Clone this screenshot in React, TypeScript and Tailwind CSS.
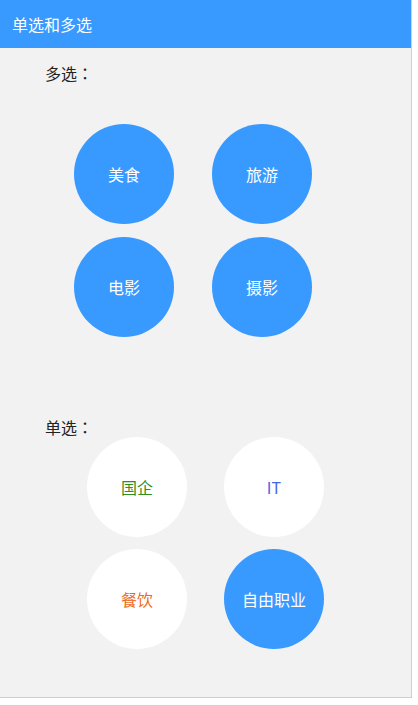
import React, { useState } from 'react';

const font = { fontFamily: '"Noto Sans CJK SC", "Noto Sans", sans-serif' };

// 多选选项
const multiOptions = ['美食', '旅游', '电影', '摄影'];

// 单选选项，每个带自己的文字颜色
const singleOptions = [
  { label: '国企', color: 'text-[#2f8f1f]' },
  { label: 'IT', color: 'text-[#4466e0]' },
  { label: '餐饮', color: 'text-[#ec6a24]' },
  { label: '自由职业', color: 'text-[#2f8f1f]' },
];

const Circle = ({
  label,
  active,
  color,
  onClick,
}: {
  label: string;
  active: boolean;
  color?: string;
  onClick: () => void;
}) => (
  <button
    onClick={onClick}
    className={`w-[100px] h-[100px] rounded-full flex items-center justify-center text-[16px] ${
      active ? 'bg-[#3899ff] text-white' : `bg-white ${color}`
    }`}
  >
    {label}
  </button>
);

// 标签，冒号居中显示
const Label = ({ text, className }: { text: string; className: string }) => (
  <div className={`ml-[45px] leading-5 text-[16px] text-[#222] ${className}`}>
    {text}
    <span className="font-['Noto_Sans_CJK_JP']">：</span>
  </div>
);

export default function App() {
  const [multi, setMulti] = useState<string[]>(['美食', '旅游', '电影', '摄影']);
  const [single, setSingle] = useState('自由职业');

  const toggle = (item: string) =>
    setMulti((prev) => (prev.includes(item) ? prev.filter((i) => i !== item) : [...prev, item]));

  return (
    <div
      className="w-[412px] h-[698px] bg-[#f2f2f2] border-r border-b border-[#cfcfcf] flex flex-col"
      style={font}
    >
      {/* 顶部标题栏 */}
      <div className="h-[48px] bg-[#3899ff] flex items-center pl-3 shrink-0">
        <span className="text-white text-[16px]">单选和多选</span>
      </div>

      {/* 多选 */}
      <Label text="多选" className="mt-[15px]" />
      <div className="ml-[74px] mt-[41px] grid grid-cols-[100px_100px] gap-x-[38px] gap-y-[13px]">
        {multiOptions.map((item) => (
          <Circle key={item} label={item} active={multi.includes(item)} onClick={() => toggle(item)} />
        ))}
      </div>

      {/* 单选 */}
      <Label text="单选" className="mt-[80px]" />
      <div className="ml-[87px] grid grid-cols-[100px_100px] gap-x-[37px] gap-y-[12px]">
        {singleOptions.map((o) => (
          <Circle
            key={o.label}
            label={o.label}
            color={o.color}
            active={single === o.label}
            onClick={() => setSingle(o.label)}
          />
        ))}
      </div>
    </div>
  );
}
